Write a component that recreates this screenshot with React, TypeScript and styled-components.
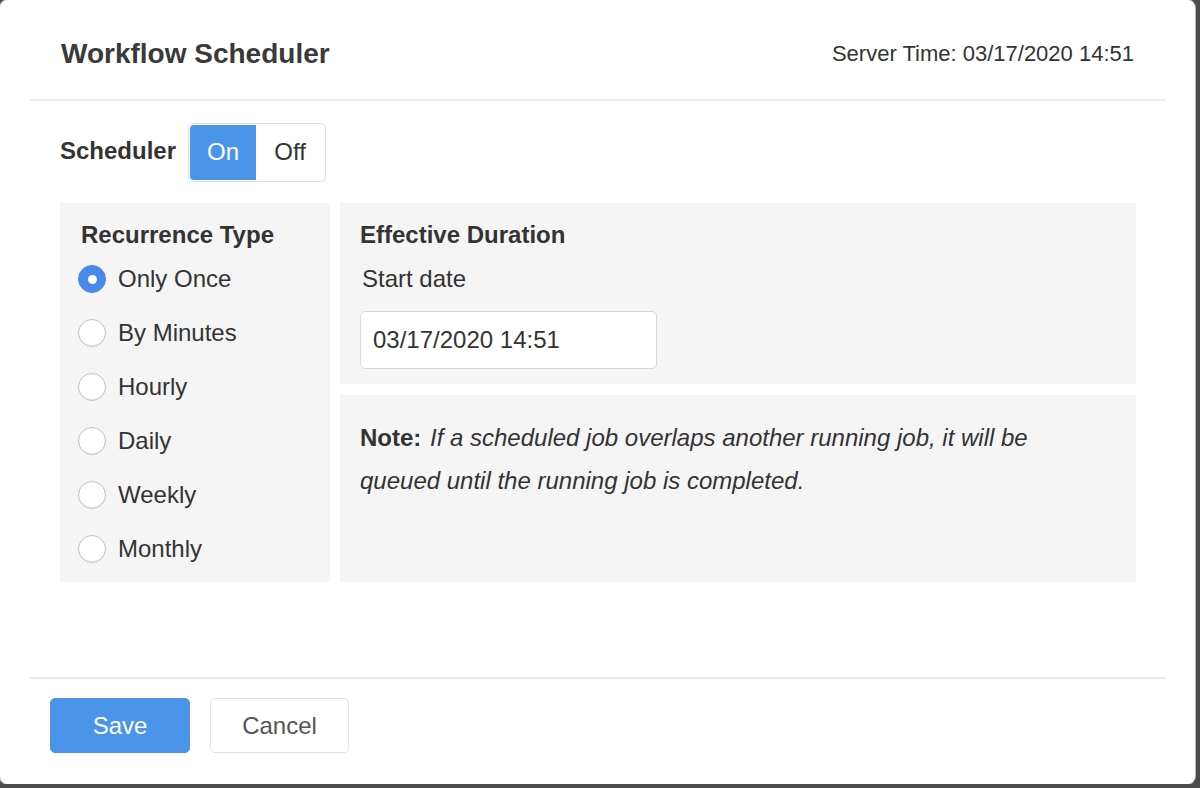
import React, { useState } from "react";
import styled, { createGlobalStyle } from "styled-components";

const GlobalStyle = createGlobalStyle`
  html, body {
    margin: 0;
    padding: 0;
    background: #4b4b4b;
    font-family: "Liberation Sans", Arial, Helvetica, sans-serif;
    color: #333;
  }
`;

const Modal = styled.div`
  width: 1195px;
  height: 784px;
  box-sizing: border-box;
  background: #fff;
  border-radius: 8px;
  box-shadow: 0 0 0 1px #b8b8b8;
  padding: 0 29px 0 30px;
  display: flex;
  flex-direction: column;
`;

const Header = styled.div`
  height: 101px;
  flex: none;
  display: flex;
  align-items: center;
  justify-content: space-between;
  padding: 8px 32px 0 31px;
  box-sizing: border-box;
  border-bottom: 2px solid #ebebeb;
`;

const Title = styled.h1`
  margin: 0;
  font-size: 28px;
  font-weight: 700;
  color: #3a3a3a;
`;

const ServerTime = styled.div`
  font-size: 22px;
  color: #333;
`;

const Body = styled.div`
  flex: 1;
  padding: 21px 30px 0 30px;
  display: flex;
  flex-direction: column;
`;

const SchedulerRow = styled.div`
  display: flex;
  align-items: center;
  gap: 12px;
  height: 60px;
`;

const Label = styled.span`
  font-size: 24px;
  font-weight: 700;
  color: #333;
  margin-top: -3px;
`;

const Toggle = styled.div`
  display: flex;
  height: 59px;
  border: 1px solid #dedede;
  border-radius: 5px;
  padding: 1px;
  box-sizing: border-box;
`;

const ToggleOption = styled.button<{ $active: boolean }>`
  border: none;
  width: ${(p) => (p.$active ? "66px" : "68px")};
  font-family: inherit;
  font-size: 24px;
  padding: 0;
  cursor: pointer;
  background: ${(p) => (p.$active ? "#4a94ea" : "#fff")};
  color: ${(p) => (p.$active ? "#fff" : "#333")};
  border-radius: ${(p) => (p.$active ? "4px 0 0 4px" : "0 4px 4px 0")};
`;

const Panels = styled.div`
  margin-top: 21px;
  display: grid;
  grid-template-columns: 270px 796px;
  gap: 10px;
  height: 379px;
`;

const Panel = styled.div<{ $pad?: string }>`
  background: #f5f5f5;
  padding: ${(p) => p.$pad || "18px 20px"};
  box-sizing: border-box;
`;

const RightCol = styled.div`
  display: flex;
  flex-direction: column;
  gap: 11px;
`;

const PanelTitle = styled.div`
  font-size: 24px;
  font-weight: 700;
  line-height: 28px;
  color: #333;
`;

const RadioList = styled.div`
  margin-top: 3px;
  display: flex;
  flex-direction: column;
`;

const RadioItem = styled.label`
  display: flex;
  align-items: center;
  height: 54px;
  gap: 12px;
  margin-left: -3px;
  font-size: 24px;
  color: #333;
  cursor: pointer;
`;

const RadioCircle = styled.span<{ $checked: boolean }>`
  width: 28px;
  height: 28px;
  box-sizing: border-box;
  border-radius: 50%;
  flex: none;
  display: flex;
  align-items: center;
  justify-content: center;
  background: ${(p) => (p.$checked ? "#4a88ea" : "#fff")};
  border: 1px solid ${(p) => (p.$checked ? "#4a88ea" : "#c2c2c2")};
  box-shadow: ${(p) => (p.$checked ? "none" : "inset 0 -1px 1px rgba(0,0,0,0.08)")};

  &::after {
    content: "";
    display: ${(p) => (p.$checked ? "block" : "none")};
    width: 9px;
    height: 9px;
    border-radius: 50%;
    background: #fff;
  }
`;

const FieldLabel = styled.div`
  margin: 16px 0 0 2px;
  font-size: 24px;
  line-height: 28px;
  color: #333;
`;

const DateInput = styled.input`
  margin-top: 18px;
  width: 297px;
  height: 58px;
  box-sizing: border-box;
  border: 1px solid #d9d9d9;
  border-radius: 5px;
  background: #fff;
  padding: 0 12px;
  font-family: inherit;
  font-size: 24px;
  color: #333;
  outline: none;
`;

const Note = styled.p`
  margin: 0;
  font-size: 24px;
  line-height: 43px;
  font-style: italic;
  color: #333;

  strong {
    font-style: normal;
    font-weight: 700;
    margin-right: 2px;
  }
`;

const Footer = styled.div`
  height: 107px;
  flex: none;
  border-top: 2px solid #ebebeb;
  box-sizing: border-box;
  display: flex;
  align-items: flex-start;
  gap: 20px;
  padding: 19px 0 0 20px;
`;

const Button = styled.button<{ $primary?: boolean }>`
  width: ${(p) => (p.$primary ? "140px" : "139px")};
  height: 55px;
  border-radius: 5px;
  font-family: inherit;
  font-size: 24px;
  cursor: pointer;
  background: ${(p) => (p.$primary ? "#4a94ea" : "#fff")};
  color: ${(p) => (p.$primary ? "#fff" : "#555")};
  border: 1px solid ${(p) => (p.$primary ? "#4a94ea" : "#e3e3e3")};
`;

const options = ["Only Once", "By Minutes", "Hourly", "Daily", "Weekly", "Monthly"];

export default function App() {
  const [on, setOn] = useState(true);
  const [recurrence, setRecurrence] = useState("Only Once");

  return (
    <>
      <GlobalStyle />
      <Modal>
        <Header>
          <Title>Workflow Scheduler</Title>
          <ServerTime>Server Time: 03/17/2020 14:51</ServerTime>
        </Header>
        <Body>
          <SchedulerRow>
            <Label>Scheduler</Label>
            <Toggle>
              <ToggleOption $active={on} onClick={() => setOn(true)}>
                On
              </ToggleOption>
              <ToggleOption $active={!on} onClick={() => setOn(false)}>
                Off
              </ToggleOption>
            </Toggle>
          </SchedulerRow>
          <Panels>
            <Panel $pad="18px 20px 6px 21px">
              <PanelTitle>Recurrence Type</PanelTitle>
              <RadioList>
                {options.map((o) => (
                  <RadioItem key={o} onClick={() => setRecurrence(o)}>
                    <RadioCircle $checked={recurrence === o} />
                    {o}
                  </RadioItem>
                ))}
              </RadioList>
            </Panel>
            <RightCol>
              <Panel $pad="18px 20px 14px 20px" style={{ height: 181 }}>
                <PanelTitle>Effective Duration</PanelTitle>
                <FieldLabel>Start date</FieldLabel>
                <DateInput defaultValue="03/17/2020 14:51" />
              </Panel>
              <Panel $pad="21px 80px 21px 20px" style={{ flex: 1 }}>
                <Note>
                  <strong>Note:</strong> If a scheduled job overlaps another running job, it will be
                  queued until the running job is completed.
                </Note>
              </Panel>
            </RightCol>
          </Panels>
        </Body>
        <Footer>
          <Button $primary>Save</Button>
          <Button>Cancel</Button>
        </Footer>
      </Modal>
    </>
  );
}
